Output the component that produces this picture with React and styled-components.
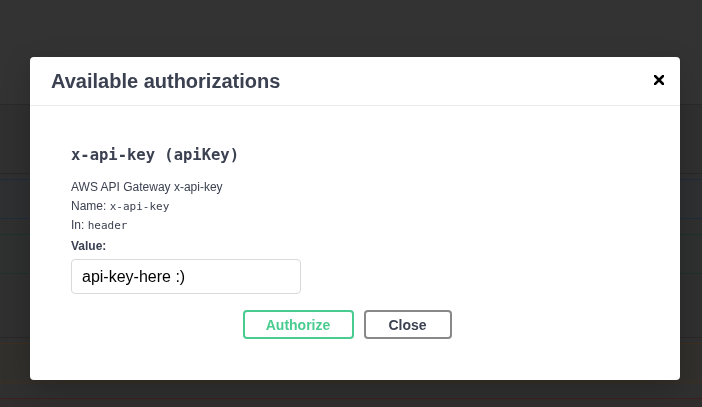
import React, { useState } from 'react'
import styled, { createGlobalStyle } from 'styled-components'

const GlobalStyle = createGlobalStyle`
  html, body {
    margin: 0;
    padding: 0;
    background: #333333;
    font-family: "Liberation Sans", Arial, sans-serif;
  }
`;

const Page = styled.div`
  width: 702px;
  height: 407px;
  overflow: hidden;
  background: #303030;
`;

const Topbar = styled.div`
  height: 104px;
  background: #333333;
  border-bottom: 1px solid #2a2a2a;
`;

const TagHeader = styled.div`
  height: ${p => p.h}px;
  border-bottom: 1px solid #282828;
  margin-bottom: 5px;
`;

const opColors = {
  get: { border: '#1f2c3c', bg: '#2e3032' },
  post: { border: '#1e3228', bg: '#2e3130' },
  put: { border: '#3e2f1e', bg: '#32302d' },
  delete: { border: '#3e2020', bg: '#322e2e' },
};

const OpBlock = styled.div`
  height: 38px;
  margin-bottom: 15px;
  border-top: 1px solid ${p => opColors[p.method].border};
  border-bottom: 1px solid ${p => opColors[p.method].border};
  background: ${p => opColors[p.method].bg};
`;

const Backdrop = styled.div`
  position: fixed;
  inset: 0;
  padding: 57px 22px 0 30px;
`;

const Modal = styled.div`
  width: 650px;
  background: #ffffff;
  border-radius: 4px;
  box-shadow: 0 10px 30px rgba(0, 0, 0, 0.2);
`;

const ModalHeader = styled.div`
  display: flex;
  align-items: center;
  justify-content: space-between;
  height: 49px;
  padding: 0 15px 3px 21px;
  box-sizing: border-box;
  border-bottom: 1px solid #ebebeb;
`;

const Title = styled.h3`
  margin: 3px 0 0;
  font-size: 20px;
  font-weight: 700;
  color: #3b4151;
`;

const CloseX = styled.button`
  display: flex;
  align-items: center;
  justify-content: center;
  width: 12px;
  height: 12px;
  padding: 0;
  border: none;
  background: none;
  cursor: pointer;
`;

const ModalContent = styled.div`
  padding: 20px 20px 31px 21px;
`;

const AuthContainer = styled.div`
  padding: 10px 20px;
`;

const SchemeTitle = styled.h4`
  margin: 9px 0 13px;
  font-family: "DejaVu Sans Mono", "Liberation Mono", monospace;
  font-size: 15.5px;
  font-weight: 700;
  line-height: 20px;
  color: #3b4151;
`;

const Line = styled.div`
  font-size: 12px;
  line-height: 19px;
  color: #3b4151;
`;

const Code = styled.code`
  font-family: "DejaVu Sans Mono", "Liberation Mono", monospace;
  font-size: 11px;
`;

const Label = styled.label`
  display: block;
  margin-top: 2px;
  font-size: 12px;
  font-weight: 700;
  line-height: 19px;
  color: #3b4151;
`;

const Input = styled.input`
  display: block;
  box-sizing: border-box;
  width: 230px;
  height: 35px;
  margin-top: 3px;
  padding: 0 10px;
  border: 1px solid #d9d9d9;
  border-radius: 4px;
  font-family: "Liberation Sans", Arial, sans-serif;
  font-size: 16px;
  color: #000;
  outline: none;
`;

const BtnWrapper = styled.div`
  display: flex;
  justify-content: center;
  padding-top: 16px;
`;

const Btn = styled.button`
  box-sizing: border-box;
  height: 29px;
  width: ${p => p.w}px;
  margin-right: ${p => p.mr || 0}px;
  border: 2px solid ${p => p.color};
  border-radius: 4px;
  background: transparent;
  font-family: "Liberation Sans", Arial, sans-serif;
  font-size: 14px;
  font-weight: 700;
  color: ${p => p.text};
  cursor: pointer;
`;

function App() {
  const [apiKey, setApiKey] = useState('api-key-here :)')
  return (
    <>
      <GlobalStyle />
      <Page>
        <Topbar />
        <TagHeader h={68} />
        <OpBlock method="get" />
        <OpBlock method="post" />
        <TagHeader h={48} />
        <OpBlock method="put" />
        <OpBlock method="delete" />
      </Page>
      <Backdrop>
        <Modal>
          <ModalHeader>
            <Title>Available authorizations</Title>
            <CloseX aria-label="Close">
              <svg width="10" height="10" viewBox="0 0 10 10">
                <path d="M1 1L9 9M9 1L1 9" stroke="#000" strokeWidth="2.6" strokeLinecap="square" />
              </svg>
            </CloseX>
          </ModalHeader>
          <ModalContent>
            <AuthContainer>
              <SchemeTitle>x-api-key (apiKey)</SchemeTitle>
              <Line>AWS API Gateway x-api-key</Line>
              <Line>Name: <Code>x-api-key</Code></Line>
              <Line>In: <Code>header</Code></Line>
              <Label>Value:</Label>
              <Input value={apiKey} onChange={e => setApiKey(e.target.value)} />
              <BtnWrapper>
                <Btn w={111} mr={10} color="#49cc90" text="#49cc90">Authorize</Btn>
                <Btn w={88} mr={17} color="#888888" text="#3b4151">Close</Btn>
              </BtnWrapper>
            </AuthContainer>
          </ModalContent>
        </Modal>
      </Backdrop>
    </>
  )
}

export default App
